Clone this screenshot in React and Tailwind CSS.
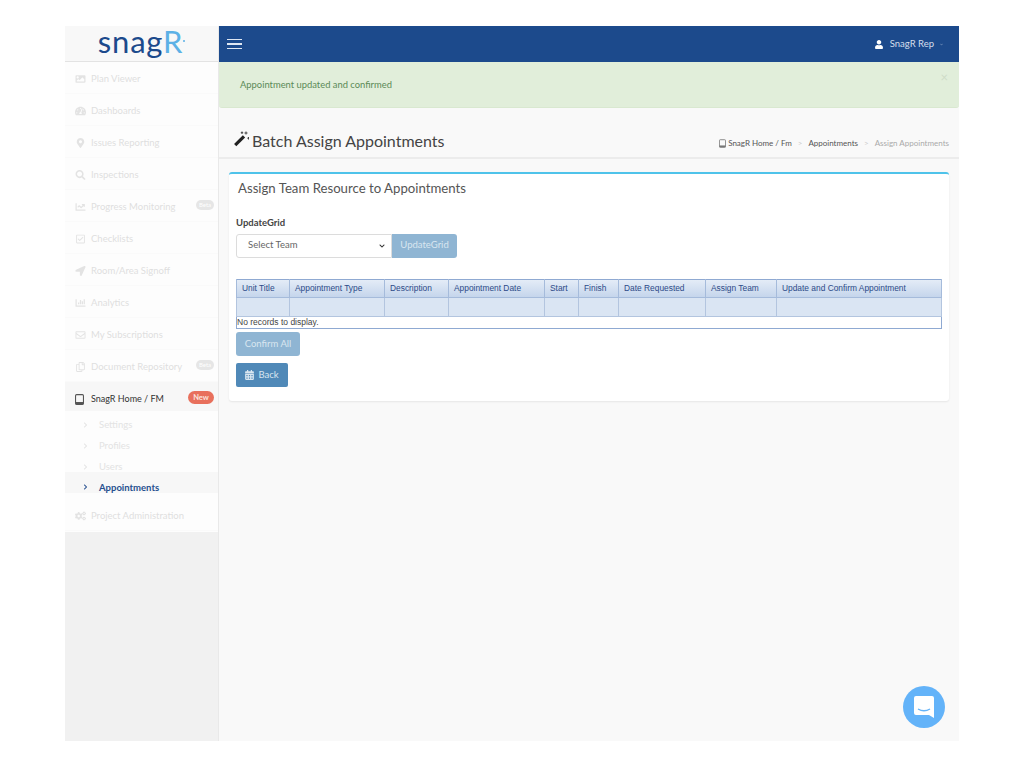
import React from "react";
import { FaImage, FaTachometerAlt, FaMapMarkerAlt, FaSearch, FaChartLine, FaRegCheckSquare, FaLocationArrow, FaChartBar, FaRegEnvelope, FaRegCopy, FaCogs, FaCalendarAlt, FaUser, FaChevronRight, FaChevronDown } from "react-icons/fa";

const menu = [
  [FaImage, "Plan Viewer"],
  [FaTachometerAlt, "Dashboards"],
  [FaMapMarkerAlt, "Issues Reporting"],
  [FaSearch, "Inspections"],
  [FaChartLine, "Progress Monitoring", "Beta"],
  [FaRegCheckSquare, "Checklists"],
  [FaLocationArrow, "Room/Area Signoff"],
  [FaChartBar, "Analytics"],
  [FaRegEnvelope, "My Subscriptions"],
  [FaRegCopy, "Document Repository", "Beta"],
];
const cols = [
  ["Unit Title", 53], ["Appointment Type", 95], ["Description", 64], ["Appointment Date", 96], ["Start", 34],
  ["Finish", 40], ["Date Requested", 87], ["Assign Team", 71], ["Update and Confirm Appointment", 165],
];

function Tablet({ className, color }) {
  return (
    <svg viewBox="0 0 10 12" className={className}>
      <rect x="0.6" y="0.6" width="8.8" height="10.8" rx="1.2" fill="none" stroke={color} strokeWidth="1.2" />
      <rect x="0.6" y="8.8" width="8.8" height="2.6" fill={color} />
    </svg>
  );
}

function Row({ icon: Icon, label, badge }) {
  return (
    <div className="flex items-center h-8 pl-[10px] pr-[4px] pt-[3px] text-[#dfdfdf] border-b border-[#fafafa]">
      <Icon className="w-[11px] h-[10px] mr-[5px] shrink-0 text-[#e3e3e3]" />
      <span className="text-[9.5px] whitespace-nowrap">{label}</span>
      {badge && <span className="ml-auto -mt-[5px] w-[18px] h-[10px] rounded-full bg-[#e6e6e6] text-white text-[6px] leading-[10px] text-center">{badge}</span>}
    </div>
  );
}

function Sub({ label, className }) {
  return (
    <div className={"flex pl-[18px] text-[#e3e3e3] " + className}>
      <FaChevronRight className="w-[5px] h-[6px] mr-[11px] mt-[3px]" />
      <span className="text-[9.5px] leading-[12px]">{label}</span>
    </div>
  );
}

export default function App() {
  return (
    <div className="bg-white min-h-[768px] pt-[26px] pl-[65px] font-['Lato',sans-serif]">
      <div className="relative w-[894px] h-[715px] flex bg-[#f9f9f9]">
        <aside className="w-[154px] shrink-0 bg-[#f1f1f1] border-r border-[#e9e9e9] flex flex-col">
          <div className="h-[36px] bg-[#f8f8f8] border-b border-[#e3e3e3] flex items-center justify-center">
            <span className="text-[31px] leading-none tracking-[0.8px] text-[#1c4a8c] -mt-[4px]">snag<span className="text-[#5db1e6]">R</span></span>
            <span className="w-[2px] h-[2px] rounded-full bg-[#5db1e6] -mt-[6px]" />
          </div>
          <div className="bg-[#fdfdfd]">
            {menu.map(([I, l, b]) => <Row key={l} icon={I} label={l} badge={b} />)}
            <div className="flex items-center h-[29px] pl-[10px] pr-[4px] pt-[5px] bg-[#f7f7f7] text-[#333]">
              <Tablet className="w-[9px] h-[11px] mr-[7px] shrink-0" color="#555" />
              <span className="text-[9px]">SnagR Home / FM</span>
              <span className="ml-auto -mt-[4px] w-[26px] h-[13px] rounded-full bg-[#e8705c] text-[#fbe4df] text-[7.5px] font-bold leading-[13px] text-center">New</span>
            </div>
            <div className="pt-[8px]">
              <Sub label="Settings" className="h-[21px]" />
              <Sub label="Profiles" className="h-[21px]" />
              <Sub label="Users" className="h-[11px]" />
              <div className="flex items-end pl-[18px] h-[21px] bg-[#f7f7f7] text-[#264f8f]">
                <FaChevronRight className="w-[5px] h-[6px] mr-[11px] mb-[3px]" />
                <span className="text-[9.5px] leading-[10px] font-bold">Appointments</span>
              </div>
            </div>
            <div className="h-[39px] pt-[6px]">
              <Row icon={FaCogs} label="Project Administration" />
            </div>
          </div>
        </aside>
        <main className="flex-1 flex flex-col min-w-0">
          <header className="h-[36px] bg-[#1c4a8c] flex items-center pl-[8px] pr-[16px] text-white shrink-0">
            <div className="flex flex-col gap-[3px]">
              <span className="block w-[15px] h-[1.5px] bg-[#dfe7f2]" />
              <span className="block w-[15px] h-[1.5px] bg-[#dfe7f2]" />
              <span className="block w-[15px] h-[1.5px] bg-[#dfe7f2]" />
            </div>
            <div className="ml-auto flex items-center gap-[6px]">
              <FaUser className="w-[10px] h-[9px]" />
              <span className="text-[9.5px] text-[#d5deeb]">SnagR Rep</span>
              <FaChevronDown className="w-[3px] h-[3px] text-[#8ea6c8]" />
            </div>
          </header>
          <div className="h-[46px] bg-[#e1eeda] rounded-b-[3px] border-b border-[#d9e8d0] flex items-center pl-[21px] pr-[11px] pt-[1px] text-[#5b8a57] shrink-0">
            <span className="text-[9.4px]">Appointment updated and confirmed</span>
            <span className="ml-auto -mt-[16px] text-[13px] leading-none text-[#cfdcc8]">×</span>
          </div>
          <div className="h-[51px] border-b-2 border-[#ececec] flex items-end pb-[4px] pl-[14px] pr-[10px] bg-[#f9f9f9] shrink-0">
            <svg viewBox="0 0 16 16" className="w-[16px] h-[16px] mb-[6px] mr-[3px]">
              <path d="M2.2 14.2 11 5.4" stroke="#222" strokeWidth="3.2" />
              <path d="M13 0.5v3M11.5 2h3M15.5 6v2.5M14.3 7.2h2.4M9 0.5v2.5M7.8 1.7h2.4" stroke="#444" strokeWidth="1" />
            </svg>
            <h1 className="text-[16px] leading-[24px] text-[#444] font-normal whitespace-nowrap">Batch Assign Appointments</h1>
            <nav className="ml-auto flex items-center text-[8px] text-[#555] whitespace-nowrap mb-[4px]">
              <Tablet className="w-[7px] h-[9px] mr-[2px]" color="#777" />
              <span>SnagR Home / Fm</span>
              <span className="mx-[6px] text-[#ccc]">&gt;</span>
              <span>Appointments</span>
              <span className="mx-[6px] text-[#ccc]">&gt;</span>
              <span className="text-[#aaa]">Assign Appointments</span>
            </nav>
          </div>
          <section className="mt-[13px] ml-[10px] w-[720px] h-[229px] bg-white border-t-2 border-[#4fc3ea] rounded-[3px] shadow-[0_1px_2px_rgba(0,0,0,0.08)] px-[7px] shrink-0">
            <h2 className="text-[13.2px] leading-[18px] text-[#555] font-normal mt-[5px] ml-[2px]">Assign Team Resource to Appointments</h2>
            <label className="block text-[9.5px] font-bold text-[#444] mt-[19px] leading-[14px]">UpdateGrid</label>
            <div className="flex mt-[4px] h-[24px]">
              <div className="w-[156px] bg-white border border-[#dcdcdc] rounded-l-[3px] flex items-center pl-[11px] pr-[5px] pb-[1px] text-[9.5px] text-[#666]">
                Select Team
                <FaChevronDown className="ml-auto mt-[1px] w-[8px] h-[6px] text-[#333]" />
              </div>
              <button className="w-[65px] bg-[#8fb5d3] text-[#d9e6f0] text-[9.5px] pb-[1px] rounded-r-[3px]">UpdateGrid</button>
            </div>
            <table className="mt-[21px] border-collapse table-fixed w-[705px] font-['Liberation_Sans',sans-serif] border border-[#8fa9d2]">
              <colgroup>{cols.map(([c, w]) => <col key={c} width={w} />)}</colgroup>
              <thead>
                <tr className="h-[18px] bg-gradient-to-b from-[#e4ecf7] to-[#c3d4eb]">
                  {cols.map(([c]) => (
                    <th key={c} className="border-x border-b border-[#a5bbdb] pl-[5px] text-left text-[8.4px] font-normal text-[#2c4a88] whitespace-nowrap">{c}</th>
                  ))}
                </tr>
              </thead>
              <tbody>
                <tr className="h-[19px] bg-[#dae5f3]">
                  {cols.map(([c]) => <td key={c} className="border-x border-b border-[#b3c5df]" />)}
                </tr>
                <tr className="h-[12px]">
                  <td colSpan={9} className="text-[8.5px] leading-[11px] text-[#444] p-0">No records to display.</td>
                </tr>
              </tbody>
            </table>
            <button className="block mt-[3px] w-[64px] h-[24px] bg-[#8fb5d3] text-[#d9e6f0] text-[9.5px] rounded-[3px]">Confirm All</button>
            <button className="flex items-center justify-center gap-[4px] mt-[7px] w-[52px] h-[24px] bg-[#5089b8] text-[#d9e6f0] text-[9.5px] rounded-[2px]">
              <FaCalendarAlt className="w-[9px] h-[10px]" />Back
            </button>
          </section>
        </main>
        <div className="absolute left-[838px] top-[660px] w-[42px] h-[42px] rounded-full bg-[#63b3f9] flex items-center justify-center">
          <svg width="22" height="24" viewBox="0 0 22 24">
            <path d="M3 1h16a2 2 0 0 1 2 2v20l-5-3H3a2 2 0 0 1-2-2V3a2 2 0 0 1 2-2z" fill="#fff" />
            <path d="M5 14q6 3.5 12 0" stroke="#63b3f9" strokeWidth="1.4" fill="none" />
          </svg>
        </div>
      </div>
    </div>
  );
}
